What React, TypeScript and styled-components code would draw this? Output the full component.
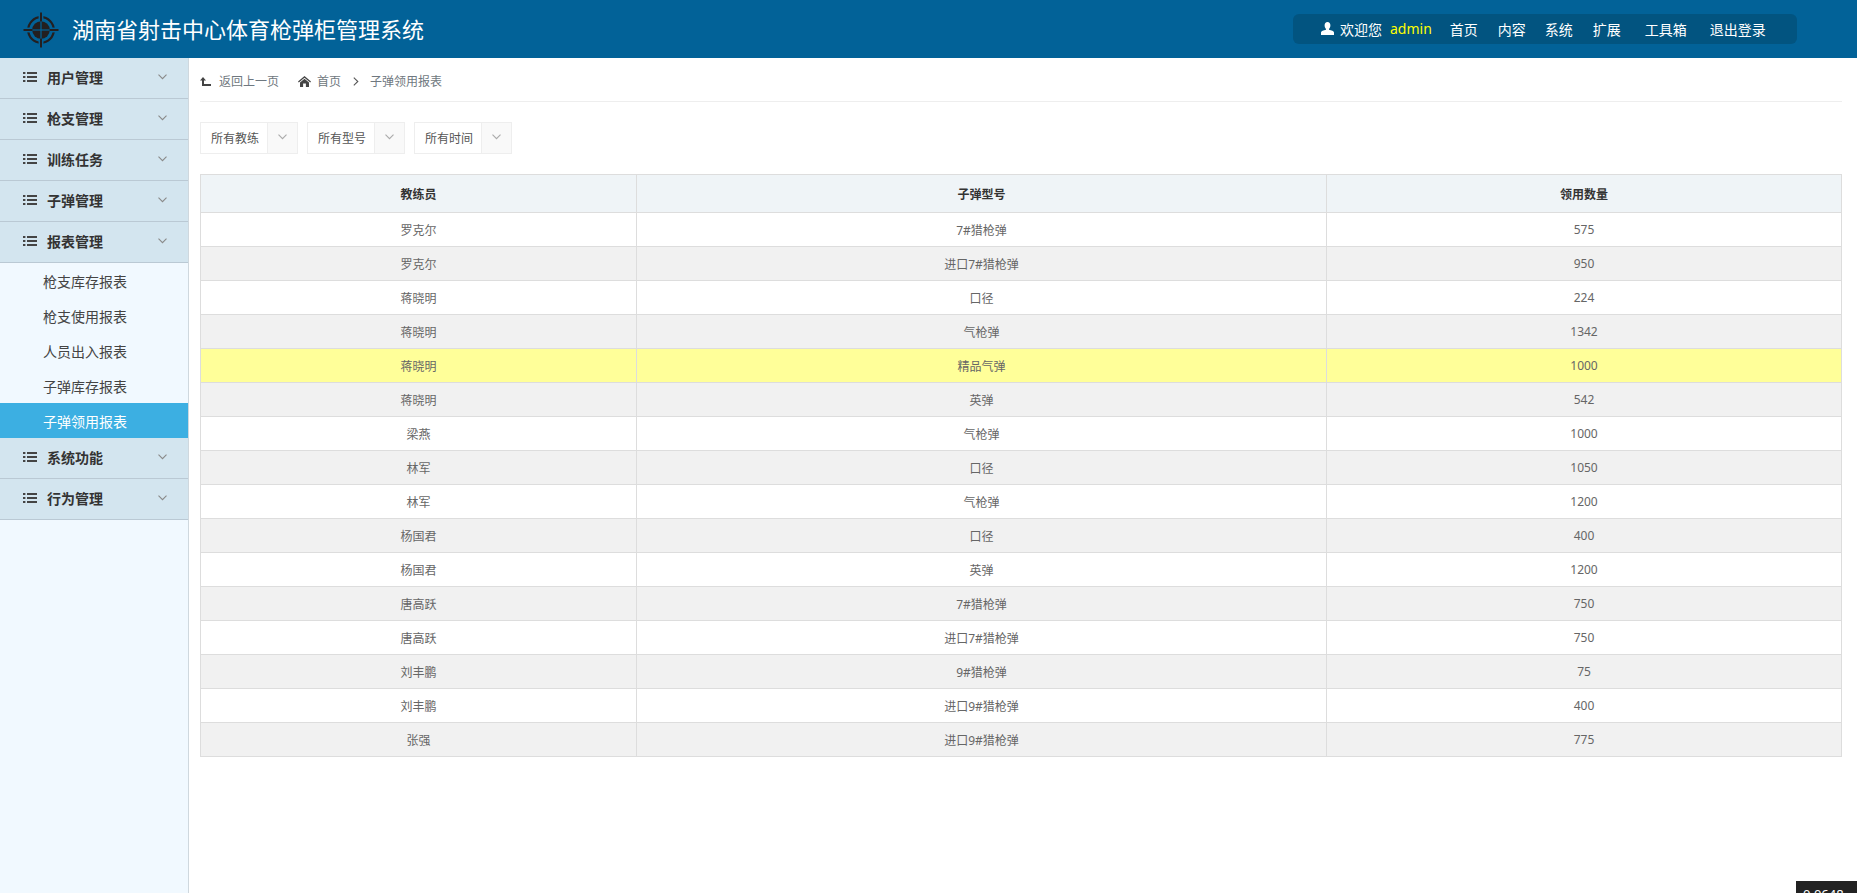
import React from "react";
import styled, { createGlobalStyle } from "styled-components";

const Global = createGlobalStyle`
  html, body { margin: 0; padding: 0; height: 100%; overflow: hidden; background: #fff; }
  body { font-family: "Noto Sans", "Noto Sans CJK SC", sans-serif; font-size: 12px; color: #666; }
  * { box-sizing: border-box; }
`;

const Page = styled.div`
  display: flex;
  flex-direction: column;
  height: 893px;
  position: relative;
  overflow: hidden;
`;

const TopBar = styled.header`
  flex: none;
  height: 58px;
  background: #026298;
  display: flex;
  align-items: center;
  padding: 0 60px 0 23px;
`;

const Logo = styled.svg`
  flex: none;
  width: 36px;
  height: 36px;
  margin-top: 1px;
`;

const Title = styled.h1`
  margin: 0 0 0 13px;
  font-size: 22px;
  font-weight: 400;
  color: #fff;
  line-height: 58px;
  white-space: nowrap;
`;

const NavPill = styled.nav`
  margin-left: auto;
  margin-top: -1px;
  width: 504px;
  height: 30px;
  background: #025480;
  border-radius: 6px;
  display: flex;
  align-items: center;
  padding-left: 28px;
  color: #fff;
  font-size: 14px;
  white-space: nowrap;
`;

const UserIcon = styled.svg`
  flex: none;
  width: 13px;
  height: 13px;
`;

const Welcome = styled.span`
  margin-left: 6px;
`;

const UserName = styled.span`
  margin-left: 8px;
  color: #ffff00;
`;

const NavLink = styled.a<{ $lead: number }>`
  margin-left: ${(p) => p.$lead}px;
  color: #fff;
`;

const Body = styled.div`
  flex: 1;
  display: flex;
  min-height: 0;
`;

const Side = styled.aside`
  flex: none;
  width: 189px;
  background: #f1f9ff;
  border-right: 1px solid #cfd8de;
`;

const MenuHead = styled.div`
  height: 41px;
  background: #d3e5ef;
  border-bottom: 1px solid #bac9d4;
  display: flex;
  align-items: center;
  padding: 0 21px 2px 23px;
  font-size: 14px;
  font-weight: 700;
  color: #333;
`;

const MenuLabel = styled.span`
  margin-left: 10px;
  flex: 1;
`;

const SubItem = styled.div<{ $active?: boolean }>`
  height: 35px;
  line-height: 35px;
  padding: 1px 0 0 43px;
  font-size: 14px;
  color: ${(p) => (p.$active ? "#fff" : "#444")};
  background: ${(p) => (p.$active ? "#3cafe2" : "transparent")};
`;

const Main = styled.main`
  flex: 1;
  min-width: 0;
  padding: 0 15px 0 11px;
`;

const Crumbs = styled.div`
  height: 44px;
  padding-top: 3px;
  border-bottom: 1px solid #eee;
  display: flex;
  align-items: center;
  font-size: 12px;
  color: #6f7880;
`;

const BackLabel = styled.span`
  margin-left: 8px;
  margin-right: 19px;
`;

const HomeIcon = styled.svg`
  flex: none;
  width: 13px;
  height: 11px;
`;

const HomeLabel = styled.span`
  margin-left: 6px;
`;

const CrumbSep = styled.svg`
  width: 6px;
  height: 9px;
  margin: 0 11px 0 12px;
`;

const Filters = styled.div`
  display: flex;
  gap: 9px;
  margin-top: 20px;
`;

const Select = styled.div`
  width: 98px;
  height: 32px;
  border: 1px solid #eee;
  display: flex;
  font-size: 12px;
  color: #555;
`;

const SelectText = styled.span`
  flex: 1;
  padding: 1px 0 0 10px;
  line-height: 30px;
`;

const SelectArrow = styled.span`
  flex: none;
  width: 30px;
  border-left: 1px solid #eee;
  background: #f9f9f9;
  display: flex;
  align-items: center;
  justify-content: center;
  padding-bottom: 3px;
`;

const Table = styled.table`
  width: 1642px;
  margin-top: 20px;
  border-collapse: collapse;
  table-layout: fixed;
  font-size: 12px;
  border: 1px solid #ddd;
`;

const Th = styled.th`
  height: 38px;
  padding: 0;
  background: #eff4f7;
  border: 1px solid #ddd;
  color: #333;
  font-weight: 700;
  text-align: center;
`;

const Tr = styled.tr<{ $bg: string }>`
  background: ${(p) => p.$bg};
`;

const Td = styled.td`
  height: 34px;
  padding: 0;
  border: 1px solid #ddd;
  color: #666;
  text-align: center;
`;

const Timer = styled.div`
  position: absolute;
  right: 0;
  top: 881px;
  width: 61px;
  height: 30px;
  background: #222;
  color: #fff;
  font-size: 13px;
  line-height: 13px;
  padding: 7px 0 0 7px;
`;

const Chevron = ({ color = "#8a8a8a" }: { color?: string }) => (
  <svg width="9" height="6" viewBox="0 0 9 6" fill="none">
    <path d="M0.5 0.7 L4.5 4.7 L8.5 0.7" stroke={color} strokeWidth="1.1" />
  </svg>
);

const ListIcon = () => (
  <svg width="14" height="10" viewBox="0 0 14 10" fill="#444">
    <rect x="0" y="0" width="2.4" height="2" />
    <rect x="0" y="4" width="2.4" height="2" />
    <rect x="0" y="8" width="2.4" height="2" />
    <rect x="4" y="0" width="10" height="2" />
    <rect x="4" y="4" width="10" height="2" />
    <rect x="4" y="8" width="10" height="2" />
  </svg>
);

const BackIcon = () => (
  <svg width="11" height="9" viewBox="0 0 11 9" fill="#444">
    <path d="M3 0 L6 3.4 H4 V7 H11 V9 H2 V3.4 H0 Z" />
  </svg>
);

const topMenus = ["用户管理", "枪支管理", "训练任务", "子弹管理", "报表管理"];
const subMenus = ["枪支库存报表", "枪支使用报表", "人员出入报表", "子弹库存报表", "子弹领用报表"];
const bottomMenus = ["系统功能", "行为管理"];

const navLinks: [string, number][] = [
  ["首页", 18],
  ["内容", 20],
  ["系统", 19],
  ["扩展", 20],
  ["工具箱", 24],
  ["退出登录", 23],
];

const rows: [string, string, string][] = [
  ["罗克尔", "7#猎枪弹", "575"],
  ["罗克尔", "进口7#猎枪弹", "950"],
  ["蒋晓明", "口径", "224"],
  ["蒋晓明", "气枪弹", "1342"],
  ["蒋晓明", "精品气弹", "1000"],
  ["蒋晓明", "英弹", "542"],
  ["梁燕", "气枪弹", "1000"],
  ["林军", "口径", "1050"],
  ["林军", "气枪弹", "1200"],
  ["杨国君", "口径", "400"],
  ["杨国君", "英弹", "1200"],
  ["唐高跃", "7#猎枪弹", "750"],
  ["唐高跃", "进口7#猎枪弹", "750"],
  ["刘丰鹏", "9#猎枪弹", "75"],
  ["刘丰鹏", "进口9#猎枪弹", "400"],
  ["张强", "进口9#猎枪弹", "775"],
];

const rowBg = (i: number) => (i === 4 ? "#ffff99" : i % 2 === 1 ? "#f1f1f1" : "#fff");

const Menu = ({ label }: { label: string }) => (
  <MenuHead>
    <ListIcon />
    <MenuLabel>{label}</MenuLabel>
    <Chevron />
  </MenuHead>
);

export default function App() {
  return (
    <Page>
      <Global />
      <TopBar>
        <Logo viewBox="0 0 36 36">
          <circle cx="18" cy="18" r="12.8" fill="none" stroke="#231f20" strokeWidth="2.2" />
          <circle cx="18" cy="18" r="8.8" fill="#231f20" />
          <rect x="15.6" y="2" width="4.8" height="7" fill="#026298" />
          <rect x="15.6" y="27" width="4.8" height="7" fill="#026298" />
          <rect x="2" y="15.6" width="7" height="4.8" fill="#026298" />
          <rect x="27" y="15.6" width="7" height="4.8" fill="#026298" />
          <rect x="17" y="0.5" width="2" height="9" fill="#231f20" />
          <rect x="17" y="26.5" width="2" height="9" fill="#231f20" />
          <rect x="0.5" y="17" width="9" height="2" fill="#231f20" />
          <rect x="26.5" y="17" width="9" height="2" fill="#231f20" />
          <rect x="17.4" y="9.5" width="1.2" height="17" fill="#026298" />
          <rect x="9.5" y="17.4" width="17" height="1.2" fill="#026298" />
        </Logo>
        <Title>湖南省射击中心体育枪弹柜管理系统</Title>
        <NavPill>
          <UserIcon viewBox="0 0 13 13" fill="#fff">
            <path d="M6.5 0 C8.3 0 9.4 1.4 9.4 3.3 C9.4 5 8.7 6.2 8 6.9 V7.8 C10.4 8.4 13 9.2 13 10.6 V13 H0 V10.6 C0 9.2 2.6 8.4 5 7.8 V6.9 C4.3 6.2 3.6 5 3.6 3.3 C3.6 1.4 4.7 0 6.5 0 Z" />
          </UserIcon>
          <Welcome>欢迎您</Welcome>
          <UserName>admin</UserName>
          {navLinks.map(([label, lead]) => (
            <NavLink key={label} $lead={lead}>
              {label}
            </NavLink>
          ))}
        </NavPill>
      </TopBar>
      <Body>
        <Side>
          {topMenus.map((m) => (
            <Menu key={m} label={m} />
          ))}
          {subMenus.map((s, i) => (
            <SubItem key={s} $active={i === 4}>
              {s}
            </SubItem>
          ))}
          {bottomMenus.map((m) => (
            <Menu key={m} label={m} />
          ))}
        </Side>
        <Main>
          <Crumbs>
            <BackIcon />
            <BackLabel>返回上一页</BackLabel>
            <HomeIcon viewBox="0 0 13 11" fill="#444">
              <path d="M6.5 0 L13 5.6 L12.2 6.4 L6.5 1.8 L0.8 6.4 L0 5.6 Z M6.5 2.8 L11 6.4 V11 H7.9 V7.6 H5.1 V11 H2 V6.4 Z" />
            </HomeIcon>
            <HomeLabel>首页</HomeLabel>
            <CrumbSep viewBox="0 0 6 9" fill="none">
              <path d="M0.8 0.6 L4.8 4.5 L0.8 8.4" stroke="#555" strokeWidth="1.1" />
            </CrumbSep>
            <span>子弹领用报表</span>
          </Crumbs>
          <Filters>
            {["所有教练", "所有型号", "所有时间"].map((f) => (
              <Select key={f}>
                <SelectText>{f}</SelectText>
                <SelectArrow>
                  <Chevron color="#aaa" />
                </SelectArrow>
              </Select>
            ))}
          </Filters>
          <Table>
            <colgroup>
              <col width={436} />
              <col width={690} />
              <col />
            </colgroup>
            <thead>
              <tr>
                <Th>教练员</Th>
                <Th>子弹型号</Th>
                <Th>领用数量</Th>
              </tr>
            </thead>
            <tbody>
              {rows.map((r, i) => (
                <Tr key={i} $bg={rowBg(i)}>
                  <Td>{r[0]}</Td>
                  <Td>{r[1]}</Td>
                  <Td>{r[2]}</Td>
                </Tr>
              ))}
            </tbody>
          </Table>
        </Main>
      </Body>
      <Timer>0.0648</Timer>
    </Page>
  );
}
